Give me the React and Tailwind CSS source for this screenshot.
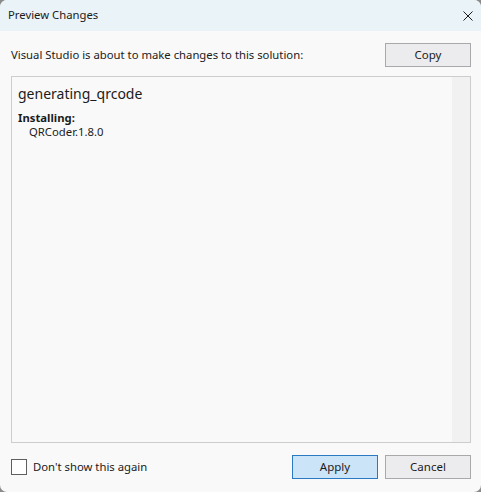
const font = { fontFamily: '"Noto Sans", "Open Sans", sans-serif' };

export default function App() {
  return (
    <div className="w-[481px] h-[492px] bg-[#8a8a8a]">
      <div
        className="w-[481px] h-[492px] flex flex-col bg-[#f9f9f9] rounded-[7px] overflow-hidden text-[#1b1b1b]"
        style={font}
      >
        {/* Title bar */}
        <div className="h-[31px] shrink-0 flex items-center justify-between pl-[8px] pr-[8px] bg-[#eaf3f7]">
          <span className="text-[11.3px]">Preview Changes</span>
          <svg width="10" height="10" viewBox="0 0 10 10">
            <path d="M0.5 0.5 L9.5 9.5 M9.5 0.5 L0.5 9.5" stroke="#1b1b1b" strokeWidth="1" />
          </svg>
        </div>

        {/* Body */}
        <div className="flex-1 flex flex-col pl-[11px] pr-[10px] pt-[12px] pb-[13px]">
          <div className="flex items-center justify-between h-[24px]">
            <span className="text-[11.3px]">Visual Studio is about to make changes to this solution:</span>
            <button className="w-[86px] h-[24px] bg-[#ececef] border border-[#a9a9ab] text-[11.5px]">
              Copy
            </button>
          </div>

          <div className="mt-[9px] h-[367px] border border-[#cdcdcd] bg-[#f9f9f9] flex">
            <div className="flex-1 pl-[6px] pt-[7px]">
              <div className="text-[14px] leading-[20px]">generating_qrcode</div>
              <div className="mt-[7px] text-[11.3px] leading-[14px] font-bold">Installing:</div>
              <div className="pl-[11px] text-[11.3px] leading-[14px]">QRCoder.1.8.0</div>
            </div>
            <div className="w-[18px] bg-[#f1f1f1]" />
          </div>

          <div className="mt-auto flex items-center">
            <div className="flex items-center gap-[6px]">
              <div className="w-[16px] h-[16px] border border-[#5f5f5f] bg-white" />
              <span className="text-[11.3px]">Don't show this again</span>
            </div>
            <div className="ml-auto flex gap-[7px]">
              <button className="w-[86px] h-[24px] bg-[#cce4f7] border border-[#2b79c2] text-[11.5px]">
                Apply
              </button>
              <button className="w-[86px] h-[24px] bg-[#ececef] border border-[#a9a9ab] text-[11.5px]">
                Cancel
              </button>
            </div>
          </div>
        </div>
      </div>
    </div>
  );
}
